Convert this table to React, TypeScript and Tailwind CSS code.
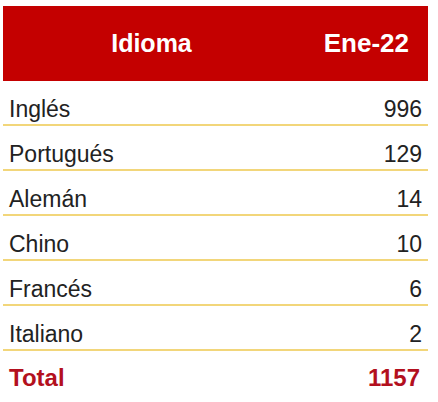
import React from 'react';

const rows = [
  { idioma: 'Inglés', valor: '996' },
  { idioma: 'Portugués', valor: '129' },
  { idioma: 'Alemán', valor: '14' },
  { idioma: 'Chino', valor: '10' },
  { idioma: 'Francés', valor: '6' },
  { idioma: 'Italiano', valor: '2' },
];

const App: React.FC = () => {
  return (
    <div className="w-[438px] h-[402px] bg-white pt-[6px] pl-[3px] font-['Liberation_Sans',Arial,sans-serif]">
      <div className="w-[425px]">
        {/* Header */}
        <div className="h-[75px] bg-[#c40000] flex items-center text-white font-bold text-[25px]">
          <div className="w-[296px] text-center pl-[1px]">Idioma</div>
          <div className="flex-1 text-right pr-[19px] text-[26px]">Ene-22</div>
        </div>

        {/* Rows */}
        {rows.map((r) => (
          <div
            key={r.idioma}
            className="h-[45px] flex items-center justify-between border-b-2 border-[#f2d67a] pt-[14px] px-[6px] text-[23px] text-[#222]"
          >
            <span>{r.idioma}</span>
            <span>{r.valor}</span>
          </div>
        ))}

        {/* Total */}
        <div className="h-[45px] flex items-center justify-between pt-[8px] pl-[6px] pr-[8px] text-[24px] font-bold text-[#b3101e]">
          <span>Total</span>
          <span>1157</span>
        </div>
      </div>
    </div>
  );
};

export default App;
